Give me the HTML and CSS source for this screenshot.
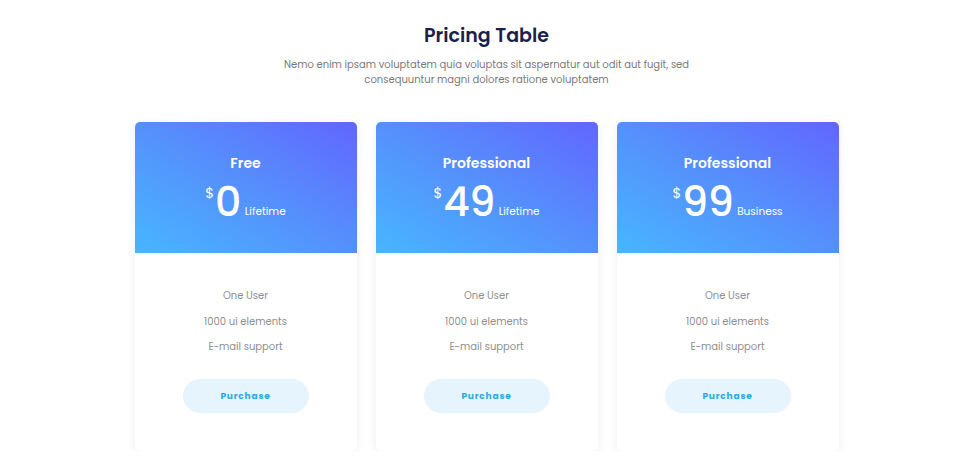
FILE: index.html
```html
<!DOCTYPE html>
<html>
<head>
<meta charset="utf-8">
<link rel="stylesheet" href="styles.css">
</head>
<body>
<div class="page">
  <h1 class="title">Pricing Table</h1>
  <p class="subtitle">Nemo enim ipsam voluptatem quia voluptas sit aspernatur aut odit aut fugit, sed<br>consequuntur magni dolores ratione voluptatem</p>
  <div class="cards">
    <div class="card">
      <div class="card-head">
        <div class="plan">Free</div>
        <div class="price"><span class="cur">$</span><span class="amt">0</span><span class="per">Lifetime</span></div>
      </div>
      <div class="card-body">
        <ul class="features">
          <li>One User</li>
          <li>1000 ui elements</li>
          <li>E-mail support</li>
        </ul>
        <button class="btn">Purchase</button>
      </div>
    </div>
    <div class="card">
      <div class="card-head">
        <div class="plan">Professional</div>
        <div class="price"><span class="cur">$</span><span class="amt">49</span><span class="per">Lifetime</span></div>
      </div>
      <div class="card-body">
        <ul class="features">
          <li>One User</li>
          <li>1000 ui elements</li>
          <li>E-mail support</li>
        </ul>
        <button class="btn">Purchase</button>
      </div>
    </div>
    <div class="card">
      <div class="card-head">
        <div class="plan">Professional</div>
        <div class="price"><span class="cur">$</span><span class="amt">99</span><span class="per">Business</span></div>
      </div>
      <div class="card-body">
        <ul class="features">
          <li>One User</li>
          <li>1000 ui elements</li>
          <li>E-mail support</li>
        </ul>
        <button class="btn">Purchase</button>
      </div>
    </div>
  </div>
</div>
</body>
</html>
```
FILE: styles.css
```css
* { box-sizing: border-box; }
html, body { margin: 0; padding: 0; background: #fff; }
body {
  font-family: "Poppins", "Open Sans", "DejaVu Sans", sans-serif;
  width: 973px;
}
.page {
  display: flex;
  flex-direction: column;
  align-items: center;
  padding-top: 22px;
}
.title {
  margin: 0;
  font-size: 19px;
  font-weight: 600;
  color: #1b1f4a;
  line-height: 28px;
}
.subtitle {
  margin: 7px 0 0;
  font-size: 10px;
  line-height: 15px;
  color: #7a7a7a;
  text-align: center;
}
.cards {
  display: flex;
  gap: 19px;
  margin-top: 35px;
}
.card {
  width: 222px;
  border-radius: 5px;
  background: #fff;
  box-shadow: 0 2px 10px rgba(0, 0, 0, 0.07);
  overflow: hidden;
}
.card-head {
  height: 131px;
  background: linear-gradient(to top right, #47b6ff 0%, #5590fc 50%, #6266ff 100%);
  color: #fff;
  display: flex;
  flex-direction: column;
  align-items: center;
  padding-top: 31px;
}
.plan {
  font-size: 14px;
  font-weight: 600;
  line-height: 20px;
}
.price {
  display: flex;
  align-items: flex-start;
  margin-top: 5px;
  height: 48px;
}
.cur {
  font-size: 14px;
  line-height: 14px;
  margin-top: 8px;
  margin-right: 1px;
}
.amt {
  font-size: 41px;
  font-weight: 500;
  line-height: 48px;
  letter-spacing: -0.5px;
}
.per {
  font-size: 10.5px;
  align-self: flex-end;
  margin-left: 4px;
  margin-bottom: 8px;
  line-height: 12px;
}
.card-body {
  display: flex;
  flex-direction: column;
  align-items: center;
  padding: 35px 0 38px;
}
.features {
  list-style: none;
  margin: 0;
  padding: 0;
  text-align: center;
  font-size: 10px;
  color: #8f8f8f;
}
.features li {
  line-height: 16px;
  margin-bottom: 9.5px;
}
.features li:last-child { margin-bottom: 0; }
.btn {
  margin-top: 24px;
  width: 126px;
  height: 34px;
  border: none;
  border-radius: 17px;
  background: #e6f4fd;
  color: #29abe2;
  font-family: inherit;
  font-size: 9px;
  font-weight: 700;
  letter-spacing: 0.8px;
  cursor: pointer;
}
```
